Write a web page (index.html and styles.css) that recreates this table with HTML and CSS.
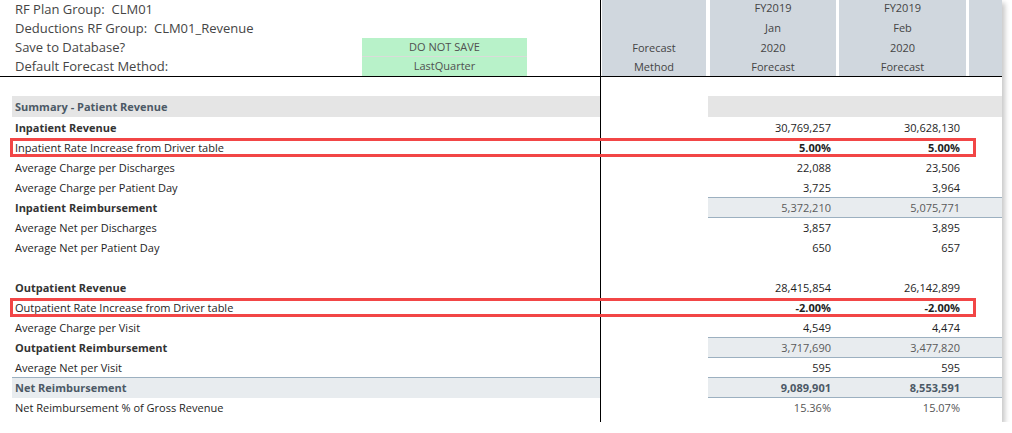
FILE: index.html
```html
<!DOCTYPE html>
<html>
<head>
<meta charset="utf-8">
<link rel="stylesheet" href="styles.css">
</head>
<body>
<div class="card">
  <div class="head">
    <div class="head-left">
      <div class="hrow"><span class="hlabel">RF Plan Group:&nbsp; CLM01</span></div>
      <div class="hrow"><span class="hlabel">Deductions RF Group:&nbsp; CLM01_Revenue</span></div>
      <div class="hrow"><span class="hlabel">Save to Database?</span><span class="gbox">DO NOT SAVE</span></div>
      <div class="hrow"><span class="hlabel">Default Forecast Method:</span><span class="gbox gbox2">LastQuarter</span></div>
    </div>
    <div class="hcol hmethod"><div></div><div></div><div>Forecast</div><div>Method</div></div>
    <div class="hcol hjan"><div>FY2019</div><div>Jan</div><div>2020</div><div>Forecast</div></div>
    <div class="hcol hfeb"><div>FY2019</div><div>Feb</div><div>2020</div><div>Forecast</div></div>
    <div class="hcol hextra"></div>
  </div>

  <div class="rows">
    <div class="row spacer"><div class="lc"></div></div>

    <div class="row section">
      <div class="lc"><div class="lab">Summary - Patient Revenue</div></div>
      <div class="mc"></div><div class="nc"></div><div class="nc"></div><div class="xc"></div>
    </div>

    <div class="row bold">
      <div class="lc"><div class="lab">Inpatient Revenue</div></div>
      <div class="mc"></div><div class="nc">30,769,257</div><div class="nc">30,628,130</div><div class="xc"></div>
    </div>
    <div class="row hl pct">
      <div class="lc"><div class="lab">Inpatient Rate Increase from Driver table</div></div>
      <div class="mc"></div><div class="nc">5.00%</div><div class="nc">5.00%</div><div class="xc"></div>
    </div>
    <div class="row">
      <div class="lc"><div class="lab">Average Charge per Discharges</div></div>
      <div class="mc"></div><div class="nc">22,088</div><div class="nc">23,506</div><div class="xc"></div>
    </div>
    <div class="row">
      <div class="lc"><div class="lab">Average Charge per Patient Day</div></div>
      <div class="mc"></div><div class="nc">3,725</div><div class="nc">3,964</div><div class="xc"></div>
    </div>
    <div class="row bold sub">
      <div class="lc"><div class="lab">Inpatient Reimbursement</div></div>
      <div class="mc"></div><div class="nc">5,372,210</div><div class="nc">5,075,771</div><div class="xc"></div>
    </div>
    <div class="row">
      <div class="lc"><div class="lab">Average Net per Discharges</div></div>
      <div class="mc"></div><div class="nc">3,857</div><div class="nc">3,895</div><div class="xc"></div>
    </div>
    <div class="row">
      <div class="lc"><div class="lab">Average Net per Patient Day</div></div>
      <div class="mc"></div><div class="nc">650</div><div class="nc">657</div><div class="xc"></div>
    </div>
    <div class="row">
      <div class="lc"><div class="lab"></div></div>
      <div class="mc"></div><div class="nc"></div><div class="nc"></div><div class="xc"></div>
    </div>

    <div class="row bold">
      <div class="lc"><div class="lab">Outpatient Revenue</div></div>
      <div class="mc"></div><div class="nc">28,415,854</div><div class="nc">26,142,899</div><div class="xc"></div>
    </div>
    <div class="row hl pct">
      <div class="lc"><div class="lab">Outpatient Rate Increase from Driver table</div></div>
      <div class="mc"></div><div class="nc">-2.00%</div><div class="nc">-2.00%</div><div class="xc"></div>
    </div>
    <div class="row">
      <div class="lc"><div class="lab">Average Charge per Visit</div></div>
      <div class="mc"></div><div class="nc">4,549</div><div class="nc">4,474</div><div class="xc"></div>
    </div>
    <div class="row bold sub">
      <div class="lc"><div class="lab">Outpatient Reimbursement</div></div>
      <div class="mc"></div><div class="nc">3,717,690</div><div class="nc">3,477,820</div><div class="xc"></div>
    </div>
    <div class="row">
      <div class="lc"><div class="lab">Average Net per Visit</div></div>
      <div class="mc"></div><div class="nc">595</div><div class="nc">595</div><div class="xc"></div>
    </div>
    <div class="row total">
      <div class="lc"><div class="lab">Net Reimbursement</div></div>
      <div class="mc"></div><div class="nc">9,089,901</div><div class="nc">8,553,591</div><div class="xc"></div>
    </div>
    <div class="row muted">
      <div class="lc"><div class="lab">Net Reimbursement % of Gross Revenue</div></div>
      <div class="mc"></div><div class="nc">15.36%</div><div class="nc">15.07%</div><div class="xc"></div>
    </div>
    <div class="row filler"><div class="lc"></div></div>
  </div>
</div>
</body>
</html>
```

FILE: styles.css
```css
* { box-sizing: border-box; }
body {
  margin: 0;
  background: #fff;
  font-family: "Open Sans", "Noto Sans", sans-serif;
}
.card {
  width: 1002px;
  height: 422px;
  background: #fff;
  box-shadow: 3px 3px 5px rgba(0, 0, 0, 0.22);
  overflow: hidden;
  display: flex;
  flex-direction: column;
}

/* header */
.head {
  display: flex;
  height: 77px;
  border-bottom: 1px solid #000;
  flex: none;
}
.head-left {
  width: 601px;
  border-right: 1px solid #000;
  display: flex;
  flex-direction: column;
}
.hrow {
  height: 19px;
  display: flex;
  align-items: stretch;
}
.hlabel {
  width: 362px;
  padding-left: 15px;
  font-size: 13px;
  line-height: 19px;
  color: #454545;
  white-space: pre;
}
.gbox {
  width: 165px;
  background: #b8f2c9;
  border-bottom: 1px solid #d9dcd9;
  color: #505050;
  font-size: 11px;
  line-height: 18px;
  text-align: center;
}
.gbox2 { border-bottom: none; }
.hcol {
  background: #d0d7de;
  display: flex;
  flex-direction: column;
  font-size: 11px;
  color: #444;
  text-align: center;
}
.hcol div { height: 19px; line-height: 19px; }
.hcol div:first-child { line-height: 15px; }
.hcol div:nth-child(2) { line-height: 17px; }
.hmethod { margin-left: 1px; width: 104px; }
.hjan { margin-left: 4px; width: 126px; }
.hfeb { margin-left: 3px; width: 127px; }
.hextra { margin-left: 3px; width: 33px; }

/* body rows */
.rows {
  display: flex;
  flex-direction: column;
  flex: 1;
}
.row {
  display: grid;
  grid-template-columns: 601px 107px 129px 129px 36px;
  height: 20px;
  font-size: 11px;
  line-height: 21px;
  color: #1e1e1e;
  position: relative;
}
.row.spacer { height: 19px; }
.row.filler { flex: 1; }
.lc {
  border-right: 1px solid #000;
  padding-left: 12px;
}
.lab {
  padding-left: 3px;
  height: 100%;
  white-space: nowrap;
}
.nc {
  text-align: right;
  padding-right: 6px;
}
.bold .lab { font-weight: 700; color: #333; }

.section { margin-bottom: 1px; }
.section .lab {
  background: #e5e5e5;
  font-weight: 700;
  color: #4c5966;
}
.section .nc, .section .xc { background: #e5e5e5; }

.sub .nc, .sub .xc {
  background: #e8ecef;
  border-top: 1px solid #9cb0c0;
  border-bottom: 1px solid #9cb0c0;
  color: #5a5a5a;
  line-height: 19px;
}

.total .lab {
  background: #e8ecef;
  border-top: 1px solid #9cb0c0;
  font-weight: 700;
  color: #4c5966;
  line-height: 19px;
}
.total .nc, .total .xc {
  background: #e8ecef;
  border-top: 1px solid #9cb0c0;
  border-bottom: 1px solid #9cb0c0;
  font-weight: 700;
  color: #4c5966;
  line-height: 19px;
}
.muted .nc { color: #555; }

.pct .nc { font-weight: 700; }
.hl::after {
  content: "";
  position: absolute;
  left: 10px;
  width: 960px;
  top: 1px;
  bottom: 0;
  border: 3px solid #f24646;
  pointer-events: none;
}
```
